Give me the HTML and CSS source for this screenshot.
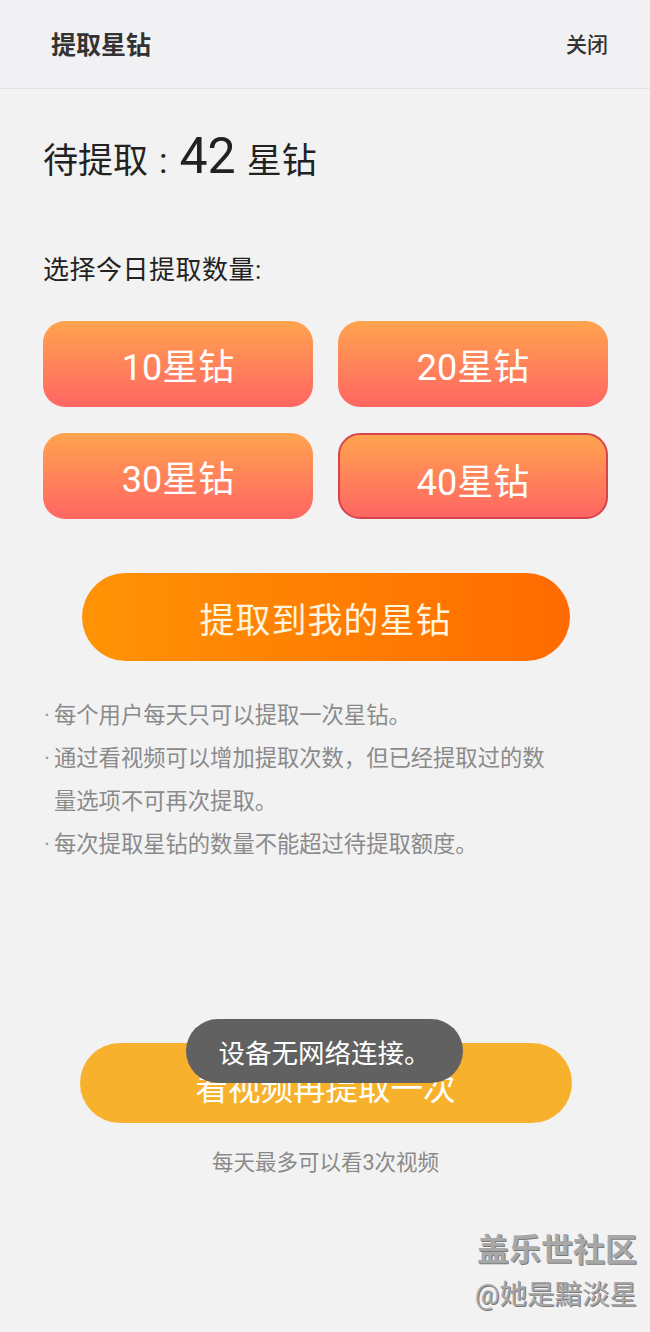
FILE: index.html
```html
<!DOCTYPE html>
<html lang="zh-CN">
<head>
<meta charset="utf-8">
<title>提取星钻</title>
<link rel="stylesheet" href="styles.css">
</head>
<body>
<div class="page">
  <header class="topbar">
    <div class="topbar-title">提取星钻</div>
    <div class="topbar-close">关闭</div>
  </header>
  <main class="content">
    <div class="summary"><span class="summary-label">待提取</span><span class="summary-colon">:</span><span class="summary-num">42</span><span class="summary-unit">星钻</span></div>
    <div class="subtitle">选择今日提取数量:</div>
    <div class="options">
      <div class="option">10星钻</div>
      <div class="option">20星钻</div>
      <div class="option">30星钻</div>
      <div class="option option-selected">40星钻</div>
    </div>
    <div class="primary-btn">提取到我的星钻</div>
    <ul class="notes">
      <li class="note"><span class="dot">·</span><span class="note-text">每个用户每天只可以提取一次星钻。</span></li>
      <li class="note"><span class="dot">·</span><span class="note-text">通过看视频可以增加提取次数，但已经提取过的数量选项不可再次提取。</span></li>
      <li class="note"><span class="dot">·</span><span class="note-text">每次提取星钻的数量不能超过待提取额度。</span></li>
    </ul>
    <div class="video-btn">看视频再提取一次</div>
    <div class="hint">每天最多可以看3次视频</div>
  </main>
  <div class="toast">设备无网络连接。</div>
  <div class="watermark">
    <div class="wm-title">盖乐世社区</div>
    <div class="wm-user">@她是黯淡星</div>
  </div>
</div>
</body>
</html>
```

FILE: styles.css
```css
* { box-sizing: border-box; }
html, body {
  margin: 0;
  padding: 0;
  background: #f2f2f2;
}
body {
  font-family: Roboto, "Noto Sans CJK SC", sans-serif;
  color: #222;
}
.page {
  position: relative;
  width: 650px;
  height: 1332px;
  overflow: hidden;
}
.topbar {
  height: 89px;
  background: #f1f1f4;
  border-bottom: 1px solid #e3e3e5;
  display: flex;
  align-items: center;
  justify-content: space-between;
  padding: 0 42px 2px 51px;
}
.topbar-title {
  font-size: 25px;
  font-weight: 700;
  color: #333;
}
.topbar-close {
  font-size: 21px;
  font-weight: 500;
  color: #333;
}
.content {
  padding: 0 42px 0 43px;
}
.summary {
  margin-top: 39px;
  height: 60px;
  display: flex;
  align-items: baseline;
  padding-top: 4px;
  color: #222;
}
.summary-label {
  font-size: 35px;
  line-height: 48px;
}
.summary-colon {
  font-size: 35px;
  line-height: 48px;
  margin: 0 12px 0 11px;
}
.summary-num {
  font-size: 50px;
  line-height: 48px;
}
.summary-unit {
  font-size: 35px;
  line-height: 48px;
  margin-left: 11px;
}
.subtitle {
  margin-top: 64px;
  font-size: 26px;
  line-height: 36px;
  letter-spacing: 0.5px;
  color: #222;
}
.options {
  margin-top: 33px;
  display: grid;
  grid-template-columns: 1fr 1fr;
  column-gap: 25px;
  row-gap: 26px;
}
.option {
  height: 86px;
  border-radius: 22px;
  background: linear-gradient(180deg, #ffa44e 0%, #ff8758 45%, #ff6663 100%);
  color: #fff;
  font-size: 36px;
  display: flex;
  align-items: center;
  justify-content: center;
}
.option-selected {
  border: 2px solid #d8444b;
  padding-top: 6px;
}
.primary-btn {
  margin: 54px auto 0;
  width: 488px;
  height: 88px;
  border-radius: 44px;
  background: linear-gradient(90deg, #ff9305 0%, #ff7f02 50%, #ff6b00 100%);
  color: #fff4de;
  font-size: 35px;
  display: flex;
  align-items: center;
  justify-content: center;
  letter-spacing: 1px;
}
.notes {
  list-style: none;
  margin: 33px 0 0;
  padding: 0 0 0 1px;
  width: 514px;
}
.note {
  display: flex;
  font-size: 22.3px;
  line-height: 43px;
  color: #8a8a8a;
}
.dot {
  flex: 0 0 10px;
  color: #9a9a9a;
}
.note-text {
  flex: 1;
}
.video-btn {
  margin: 177px auto 0;
  width: 492px;
  height: 80px;
  border-radius: 40px;
  background: #f8b12c;
  color: #fff;
  font-size: 32.5px;
  display: flex;
  align-items: center;
  justify-content: center;
  padding-top: 4px;
}
.hint {
  margin-top: 25px;
  text-align: center;
  font-size: 21.5px;
  line-height: 30px;
  color: #8a8a8a;
}
.toast {
  position: absolute;
  left: 186px;
  top: 1019px;
  width: 277px;
  height: 64px;
  border-radius: 32px;
  background: #616161;
  color: #fff;
  font-size: 26.5px;
  display: flex;
  align-items: center;
  justify-content: center;
}
.watermark {
  position: absolute;
  right: 13px;
  top: 1230px;
  text-align: right;
  color: #a8a8a8;
  text-shadow: 1px 1px 0 #7a7a7a;
}
.wm-title {
  font-size: 32px;
  font-weight: 700;
  line-height: 40px;
}
.wm-user {
  font-size: 27.5px;
  font-weight: 400;
  line-height: 38px;
  margin-top: 6px;
}
```
